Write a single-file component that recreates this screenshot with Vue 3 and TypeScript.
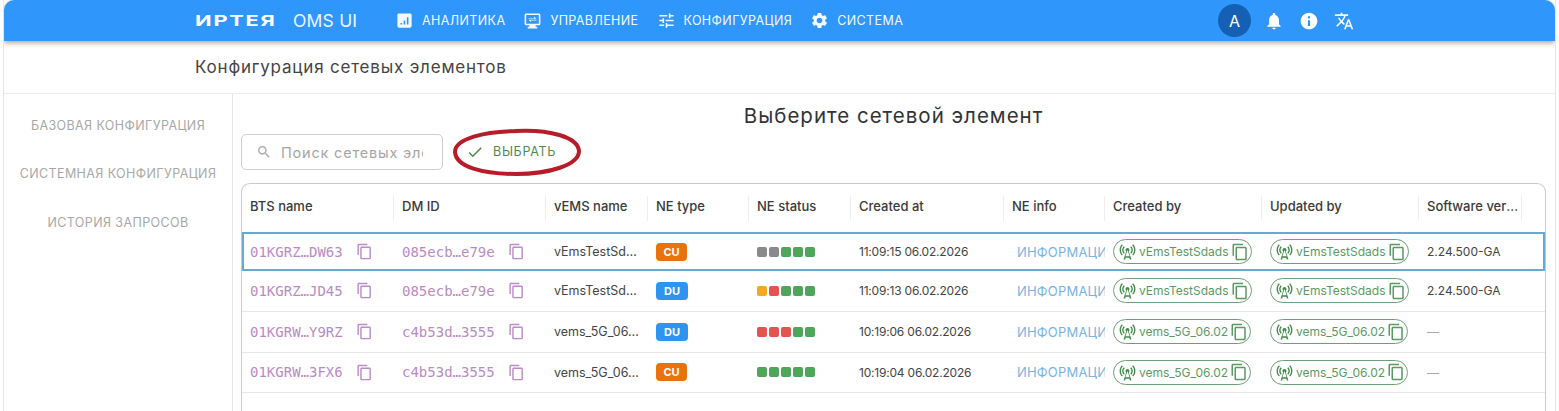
<template>
  <div class="page">
    <header class="appbar">
      <div class="brand">
        <span class="logo">ИРТЕЯ</span>
        <span class="product">OMS UI</span>
      </div>
      <nav class="nav">
        <a v-for="item in navItems" :key="item.label" class="nav-item">
          <svg class="nav-icon" viewBox="0 0 24 24" fill="currentColor" fill-rule="evenodd">
            <path :d="item.icon" />
          </svg>
          <span>{{ item.label }}</span>
        </a>
      </nav>
      <div class="actions">
        <div class="avatar">A</div>
        <svg class="action-icon" viewBox="0 0 24 24" fill="currentColor"><path :d="icons.bell" /></svg>
        <svg class="action-icon" viewBox="0 0 24 24" fill="currentColor"><path :d="icons.info" /></svg>
        <svg class="action-icon" viewBox="0 0 24 24" fill="currentColor"><path :d="icons.translate" /></svg>
      </div>
    </header>

    <div class="page-title">Конфигурация сетевых элементов</div>

    <div class="body">
      <aside class="sidebar">
        <div v-for="link in sideLinks" :key="link" class="side-link">{{ link }}</div>
      </aside>

      <main class="main">
        <h2 class="heading">Выберите сетевой элемент</h2>

        <div class="toolbar">
          <div class="search">
            <svg class="search-icon" viewBox="0 0 24 24" fill="currentColor"><path :d="icons.search" /></svg>
            <input class="search-input" placeholder="Поиск сетевых элементов" />
          </div>
          <button class="select-btn">
            <svg class="check" viewBox="0 0 24 24" fill="currentColor"><path :d="icons.check" /></svg>
            <span>ВЫБРАТЬ</span>
          </button>
          <!-- красный овал поверх кнопки -->
          <svg class="ring" width="134" height="52" viewBox="0 0 134 52" fill="none">
            <path
              d="M64 4C98 2 127 10 128 24C128 38 98 47 65 47C32 47 5 40 4 25C4 12 32 4 70 4"
              stroke="#b81c2a"
              stroke-width="4"
              stroke-linecap="round"
            />
          </svg>
        </div>

        <div class="table">
          <div class="row head">
            <div v-for="col in columns" :key="col" class="cell">
              <span class="ellipsis">{{ col }}</span>
            </div>
          </div>
          <div
            v-for="(row, index) in rows"
            :key="row.bts"
            :class="['row', { selected: index === 0 }]"
          >
            <div class="cell mono">
              <span>{{ row.bts }}</span>
              <svg class="copy" viewBox="0 0 24 24" fill="currentColor"><path :d="icons.copy" /></svg>
            </div>
            <div class="cell mono">
              <span>{{ row.dm }}</span>
              <svg class="copy" viewBox="0 0 24 24" fill="currentColor"><path :d="icons.copy" /></svg>
            </div>
            <div class="cell vems"><span class="ellipsis">{{ row.vems }}</span></div>
            <div class="cell">
              <span :class="['badge', row.type.toLowerCase()]">{{ row.type }}</span>
            </div>
            <div class="cell">
              <div class="status">
                <i v-for="(s, i) in row.status" :key="i" :class="['dot', s]"></i>
              </div>
            </div>
            <div class="cell time">{{ row.created }}</div>
            <div class="cell info">ИНФОРМАЦИЯ</div>
            <div v-for="n in 2" :key="n" class="cell chip-cell">
              <span class="chip">
                <svg class="antenna" viewBox="0 0 24 24" fill="currentColor"><path :d="icons.tower" /></svg>
                <span>{{ row.vems }}</span>
                <svg class="chip-copy" viewBox="0 0 24 24" fill="currentColor"><path :d="icons.copy" /></svg>
              </span>
            </div>
            <div class="cell version">
              <span :class="{ dash: row.version === '—' }">{{ row.version }}</span>
            </div>
            <div class="cell"></div>
          </div>
        </div>
      </main>
    </div>
  </div>
</template>

<script setup lang="ts">
type Dot = 'grey' | 'green' | 'orange' | 'red'

interface NeRow {
  bts: string
  dm: string
  vems: string
  type: 'CU' | 'DU'
  status: Dot[]
  created: string
  version: string
}

const icons = {
  bell: 'M12 22c1.1 0 2-.9 2-2h-4c0 1.1.89 2 2 2zm6-6v-5c0-3.07-1.64-5.64-4.5-6.32V4c0-.83-.67-1.5-1.5-1.5s-1.5.67-1.5 1.5v.68C7.63 5.36 6 7.92 6 11v5l-2 2v1h16v-1l-2-2z',
  info: 'M12 2C6.48 2 2 6.48 2 12s4.48 10 10 10 10-4.48 10-10S17.52 2 12 2zm1.3 16h-2.6v-7h2.6v7zm0-9h-2.6V6.4h2.6V9z',
  translate:
    'M12.87 15.07l-2.54-2.51.03-.03c1.74-1.94 2.98-4.17 3.71-6.53H17V4h-7V2H8v2H1v1.99h11.17C11.5 7.92 10.44 9.75 9 11.35 8.07 10.32 7.3 9.19 6.69 8h-2c.73 1.63 1.73 3.17 2.98 4.56l-5.09 5.02L4 19l5-5 3.11 3.11.76-2.04zM18.5 10h-2L12 22h2l1.12-3h4.75L21 22h2l-4.5-12zm-2.62 7l1.62-4.33L19.12 17h-3.24z',
  search:
    'M15.5 14h-.79l-.28-.27C15.41 12.59 16 11.11 16 9.5 16 5.91 13.09 3 9.5 3S3 5.91 3 9.5 5.91 16 9.5 16c1.61 0 3.09-.59 4.23-1.57l.27.28v.79l5 4.99L20.49 19l-4.99-5zm-6 0C7.01 14 5 11.99 5 9.5S7.01 5 9.5 5 14 7.01 14 9.5 11.99 14 9.5 14z',
  check: 'M9 16.17 4.83 12l-1.42 1.41L9 19 21 7l-1.41-1.41z',
  copy: 'M16 1H4c-1.1 0-2 .9-2 2v14h2V3h12V1zm3 4H8c-1.1 0-2 .9-2 2v14c0 1.1.9 2 2 2h11c1.1 0 2-.9 2-2V7c0-1.1-.9-2-2-2zm0 16H8V7h11v14z',
  tower:
    'm7.3 14.7 1.2-1.2c-1-1-1.5-2.3-1.5-3.5 0-1.3.5-2.6 1.5-3.5L7.3 5.3c-1.3 1.3-2 3-2 4.7s.7 3.4 2 4.7zM19.1 2.9l-1.2 1.2c1.6 1.6 2.4 3.8 2.4 5.9 0 2.1-.8 4.3-2.4 5.9l1.2 1.2c2-2 2.9-4.5 2.9-7.1 0-2.6-1-5.1-2.9-7.1zM6.1 4.1 4.9 2.9C3 4.9 2 7.4 2 10c0 2.6 1 5.1 2.9 7.1l1.2-1.2c-1.6-1.6-2.4-3.8-2.4-5.9 0-2.1.8-4.3 2.4-5.9zM16.7 14.7c1.3-1.3 2-3 2-4.7-.1-1.7-.7-3.4-2-4.7l-1.2 1.2c1 1 1.5 2.3 1.5 3.5 0 1.3-.5 2.6-1.5 3.5l1.2 1.2zM14.5 10c0-1.38-1.12-2.5-2.5-2.5S9.5 8.62 9.5 10c0 .76.34 1.42.87 1.88L7 22h2l.67-2h4.67l.66 2h2l-3.37-10.12c.53-.46.87-1.12.87-1.88zm-5.17 8L12 10l2.67 8H9.33z',
}

const navItems = [
  {
    label: 'АНАЛИТИКА',
    icon: 'M19 3H5c-1.1 0-2 .9-2 2v14c0 1.1.9 2 2 2h14c1.1 0 2-.9 2-2V5c0-1.1-.9-2-2-2zM9 17H7v-2h2v2zm4 0h-2v-5h2v5zm4 0h-2V8h2v9z',
  },
  {
    label: 'УПРАВЛЕНИЕ',
    icon: 'M20 3H4c-1.1 0-2 .9-2 2v11c0 1.1.9 2 2 2h4v2H6v2h12v-2h-2v-2h4c1.1 0 2-.9 2-2V5c0-1.1-.9-2-2-2zm0 13H4V5h16v11zM7 9h7V7l3 2.8H7V9zm10 3H10v2l-3-2.8h10V12z',
  },
  {
    label: 'КОНФИГУРАЦИЯ',
    icon: 'M3 17v2h6v-2H3zM3 5v2h10V5H3zm10 16v-2h8v-2h-8v-2h-2v6h2zM7 9v2H3v2h4v2h2V9H7zm14 4v-2H11v2h10zm-6-4h2V7h4V5h-4V3h-2v6z',
  },
  {
    label: 'СИСТЕМА',
    icon: 'M19.14 12.94c.04-.3.06-.61.06-.94 0-.32-.02-.64-.07-.94l2.03-1.58c.18-.14.23-.41.12-.61l-1.92-3.32c-.12-.22-.37-.29-.59-.22l-2.39.96c-.5-.38-1.03-.7-1.62-.94l-.36-2.54c-.04-.24-.24-.41-.48-.41h-3.84c-.24 0-.43.17-.47.41l-.36 2.54c-.59.24-1.13.57-1.62.94l-2.39-.96c-.22-.08-.47 0-.59.22L2.74 8.87c-.12.21-.08.47.12.61l2.03 1.58c-.05.3-.09.63-.09.94s.02.64.07.94l-2.03 1.58c-.18.14-.23.41-.12.61l1.92 3.32c.12.22.37.29.59.22l2.39-.96c.5.38 1.03.7 1.62.94l.36 2.54c.05.24.24.41.48.41h3.84c.24 0 .44-.17.47-.41l.36-2.54c.59-.24 1.13-.56 1.62-.94l2.39.96c.22.08.47 0 .59-.22l1.92-3.32c.12-.22.07-.47-.12-.61l-2.01-1.58zM12 15.6c-1.98 0-3.6-1.62-3.6-3.6s1.62-3.6 3.6-3.6 3.6 1.62 3.6 3.6-1.62 3.6-3.6 3.6z',
  },
]

const sideLinks = ['БАЗОВАЯ КОНФИГУРАЦИЯ', 'СИСТЕМНАЯ КОНФИГУРАЦИЯ', 'ИСТОРИЯ ЗАПРОСОВ']

const columns = [
  'BTS name',
  'DM ID',
  'vEMS name',
  'NE type',
  'NE status',
  'Created at',
  'NE info',
  'Created by',
  'Updated by',
  'Software version',
  '',
]

const rows: NeRow[] = [
  {
    bts: '01KGRZ…DW63',
    dm: '085ecb…e79e',
    vems: 'vEmsTestSdads',
    type: 'CU',
    status: ['grey', 'grey', 'green', 'green', 'green'],
    created: '11:09:15 06.02.2026',
    version: '2.24.500-GA',
  },
  {
    bts: '01KGRZ…JD45',
    dm: '085ecb…e79e',
    vems: 'vEmsTestSdads',
    type: 'DU',
    status: ['orange', 'red', 'green', 'green', 'green'],
    created: '11:09:13 06.02.2026',
    version: '2.24.500-GA',
  },
  {
    bts: '01KGRW…Y9RZ',
    dm: 'c4b53d…3555',
    vems: 'vems_5G_06.02',
    type: 'DU',
    status: ['red', 'red', 'red', 'green', 'green'],
    created: '10:19:06 06.02.2026',
    version: '—',
  },
  {
    bts: '01KGRW…3FX6',
    dm: 'c4b53d…3555',
    vems: 'vems_5G_06.02',
    type: 'CU',
    status: ['green', 'green', 'green', 'green', 'green'],
    created: '10:19:04 06.02.2026',
    version: '—',
  },
]
</script>

<style>
html,
body {
  margin: 0;
  overflow: hidden;
  background: #fff;
}
</style>

<style scoped>
.page {
  height: 411px;
  margin: 0 3px;
  border-left: 1px solid #e6e6e6;
  border-right: 1px solid #e6e6e6;
  display: flex;
  flex-direction: column;
  overflow: hidden;
  font-family: Inter, 'Noto Sans', sans-serif;
  color: #333;
  background: #fff;
}

.appbar {
  flex: none;
  height: 41px;
  display: flex;
  align-items: center;
  padding: 0 186px 0 191px;
  background: #2f96fb;
  border-radius: 10px 10px 0 0;
  box-shadow: 0 2px 5px rgba(0, 0, 0, 0.35);
  color: #fff;
  position: relative;
  z-index: 2;
}

.brand {
  display: flex;
  align-items: center;
  width: 200px;
}

.logo {
  font-weight: 700;
  font-size: 14.5px;
  letter-spacing: 1.2px;
  width: 45px;
  margin-right: 53px;
  transform: scaleX(1.5);
  transform-origin: left center;
}

.product {
  font-size: 17.5px;
  letter-spacing: 0.2px;
  opacity: 0.92;
}

.nav {
  display: flex;
  align-items: center;
  gap: 18px;
  flex: 1;
}

.nav-item {
  display: flex;
  align-items: center;
  gap: 8px;
  font-size: 12.5px;
  letter-spacing: 0.4px;
  opacity: 0.95;
}

.nav-icon {
  width: 19px;
  height: 19px;
}

.actions {
  display: flex;
  align-items: center;
}

.avatar {
  width: 33px;
  height: 33px;
  border-radius: 50%;
  background: #1560b4;
  display: flex;
  align-items: center;
  justify-content: center;
  font-size: 16px;
  margin-right: 13px;
}

.action-icon {
  width: 20px;
  height: 20px;
  margin-right: 15px;
}

.page-title {
  flex: none;
  height: 52px;
  line-height: 52px;
  padding-left: 191px;
  font-size: 17px;
  letter-spacing: 0.8px;
  color: #444;
  border-bottom: 1px solid #ececec;
}

.body {
  flex: 1;
  display: flex;
  min-height: 0;
}

.sidebar {
  flex: none;
  width: 228px;
  padding-top: 7px;
  border-right: 1px solid #e6e6e6;
}

.side-link {
  height: 48.5px;
  display: flex;
  align-items: center;
  justify-content: center;
  font-size: 12.5px;
  letter-spacing: 0.4px;
  color: #a8a8a8;
  white-space: nowrap;
}

.main {
  flex: 1;
  min-width: 0;
  padding: 0 9px 0 8px;
}

.heading {
  margin: 0;
  height: 40px;
  line-height: 44px;
  text-align: center;
  font-size: 20.5px;
  font-weight: 400;
  letter-spacing: 1px;
  color: #333;
}

.toolbar {
  display: flex;
  align-items: center;
  position: relative;
  height: 36px;
  margin-bottom: 13px;
}

.search {
  width: 202px;
  height: 36px;
  box-sizing: border-box;
  border: 1px solid #cfcfcf;
  border-radius: 5px;
  display: flex;
  align-items: center;
  padding: 0 19px 0 14px;
}

.search-icon {
  flex: none;
  width: 16px;
  height: 16px;
  color: #a8a8a8;
  margin-right: 9px;
}

.search-input {
  flex: 1;
  min-width: 0;
  border: 0;
  outline: 0;
  padding: 0;
  background: none;
  font: 14.5px Inter, 'Noto Sans', sans-serif;
  letter-spacing: 0.8px;
}

.search-input::placeholder {
  color: #a6a6a6;
  opacity: 1;
}

.select-btn {
  margin-left: 23px;
  display: flex;
  align-items: center;
  gap: 9px;
  border: 0;
  padding: 0;
  background: none;
  font: 12.5px Inter, 'Noto Sans', sans-serif;
  letter-spacing: 0.7px;
  color: #4c8c50;
}

.select-btn span {
  margin-top: -2px;
}

.check {
  width: 18px;
  height: 18px;
}

.ring {
  position: absolute;
  left: 210px;
  top: -7px;
  pointer-events: none;
}

.table {
  border: 1px solid #c9c9c9;
  border-bottom: 0;
  border-radius: 9px 9px 0 0;
  height: 240px;
}

.row {
  display: grid;
  grid-template-columns: 152px 152px 102px 101px 102px 153px 101px 157px 157px 103px 1fr;
  height: 40.8px;
  box-sizing: border-box;
  border-bottom: 1px solid #e8e8e8;
}

.row.head {
  height: 48px;
  padding-bottom: 4px;
  border-bottom: 0;
  font-size: 13px;
  font-weight: 500;
  color: #3a3a3a;
}

.row.selected {
  height: 39px;
  border-bottom: 0;
  outline: 2px solid #6aa8cf;
  outline-offset: -2px;
  background: #fff;
}

.cell {
  display: flex;
  align-items: center;
  min-width: 0;
  padding-left: 8px;
  font-size: 13px;
  color: #444;
  overflow: hidden;
  white-space: nowrap;
}

.head .cell {
  font: inherit;
  color: inherit;
  position: relative;
}

.head .cell::after {
  content: '';
  position: absolute;
  right: 0;
  top: 12px;
  bottom: 7px;
  width: 1px;
  background: #eeeeee;
}

.head .cell:last-child::after {
  display: none;
}

.ellipsis {
  overflow: hidden;
  text-overflow: ellipsis;
  padding-right: 3px;
}

.vems {
  font-size: 12.5px;
}

.vems .ellipsis {
  padding-right: 6px;
}

.mono {
  font-family: 'DejaVu Sans Mono', 'Liberation Mono', monospace;
  font-size: 14px;
  color: #b98bc4;
  gap: 13px;
}

.copy {
  flex: none;
  width: 17px;
  height: 17px;
  color: #bb8cc6;
}

.badge {
  display: inline-flex;
  align-items: center;
  justify-content: center;
  width: 31px;
  height: 18px;
  border-radius: 4px;
  color: #fff;
  font-size: 11px;
  font-weight: 700;
}

.badge.cu {
  background: #e8720c;
}

.badge.du {
  width: 32px;
  background: #2f93f0;
}

.status {
  display: flex;
  gap: 2px;
}

.dot {
  width: 10px;
  height: 10px;
  border-radius: 2px;
}

.dot.grey {
  background: #8a8a8a;
}

.dot.green {
  background: #4da65a;
}

.dot.orange {
  background: #f5a81c;
}

.dot.red {
  background: #e5534f;
}

.time {
  font-size: 12px;
  letter-spacing: -0.2px;
}

.info {
  padding-left: 13px;
  font-size: 13px;
  letter-spacing: 0.2px;
  color: #79b3e3;
}

.chip {
  display: inline-flex;
  align-items: center;
  height: 25px;
  box-sizing: border-box;
  padding: 0 2px 0 4px;
  border: 1px solid #6f9f78;
  border-radius: 13px;
  color: #5a9a62;
  font-size: 12px;
}

.antenna {
  width: 19px;
  height: 19px;
  margin-right: 2px;
  color: #3f8a48;
}

.chip-copy {
  width: 18px;
  height: 18px;
  margin-left: 2px;
  color: #5a9a62;
}

.version {
  font-size: 12px;
}

.dash {
  color: #aaa;
}
</style>
